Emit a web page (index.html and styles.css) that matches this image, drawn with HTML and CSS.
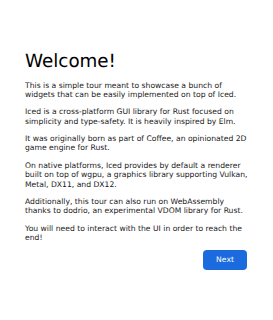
FILE: index.html
```html
<!DOCTYPE html>
<html>
<head>
    <meta charset="UTF-8">
    <meta name="viewport" content="width=device-width, initial-scale=1">
    <title>Tour</title>
    <link rel="stylesheet" href="styles.css">
</head>
<body>
<div class="tour">
    <h1 class="title">Welcome!</h1>
    <p>This is a simple tour meant to showcase a bunch of widgets that can be easily implemented on top of Iced.</p>
    <p>Iced is a cross-platform GUI library for Rust focused on simplicity and type-safety. It is heavily inspired by Elm.</p>
    <p>It was originally born as part of Coffee, an opinionated 2D game engine for Rust.</p>
    <p>On native platforms, Iced provides by default a renderer built on top of wgpu, a graphics library supporting Vulkan, Metal, DX11, and DX12.</p>
    <p>Additionally, this tour can also run on WebAssembly thanks to dodrio, an experimental VDOM library for Rust.</p>
    <p>You will need to interact with the UI in order to reach the end!</p>
    <div class="controls">
        <div class="btn">Next</div>
    </div>
</div>
</body>
</html>
```

FILE: styles.css
```css
body {
    margin: 0;
    background: #ffffff;
    font-family: "DejaVu Sans", sans-serif;
    color: #1a1a1a;
    text-rendering: geometricPrecision;
}

.tour {
    display: flex;
    flex-direction: column;
    gap: 7.5px;
    padding: 50px 25px 25px 25px;
}

.title {
    margin: 0;
    font-size: 18.3px;
    font-weight: normal;
    line-height: 23px;
    color: #000;
}

.tour p {
    margin: 0;
    font-size: 7.65px;
    line-height: 9.6px;
}

.controls {
    display: flex;
    justify-content: flex-end;
}

.btn {
    box-sizing: border-box;
    width: 44px;
    height: 20px;
    margin-right: 1px;
    line-height: 20px;
    border-radius: 4px;
    text-align: center;
    font-size: 7.65px;
    color: #fff;
    background: #1c6bde;
}
```
